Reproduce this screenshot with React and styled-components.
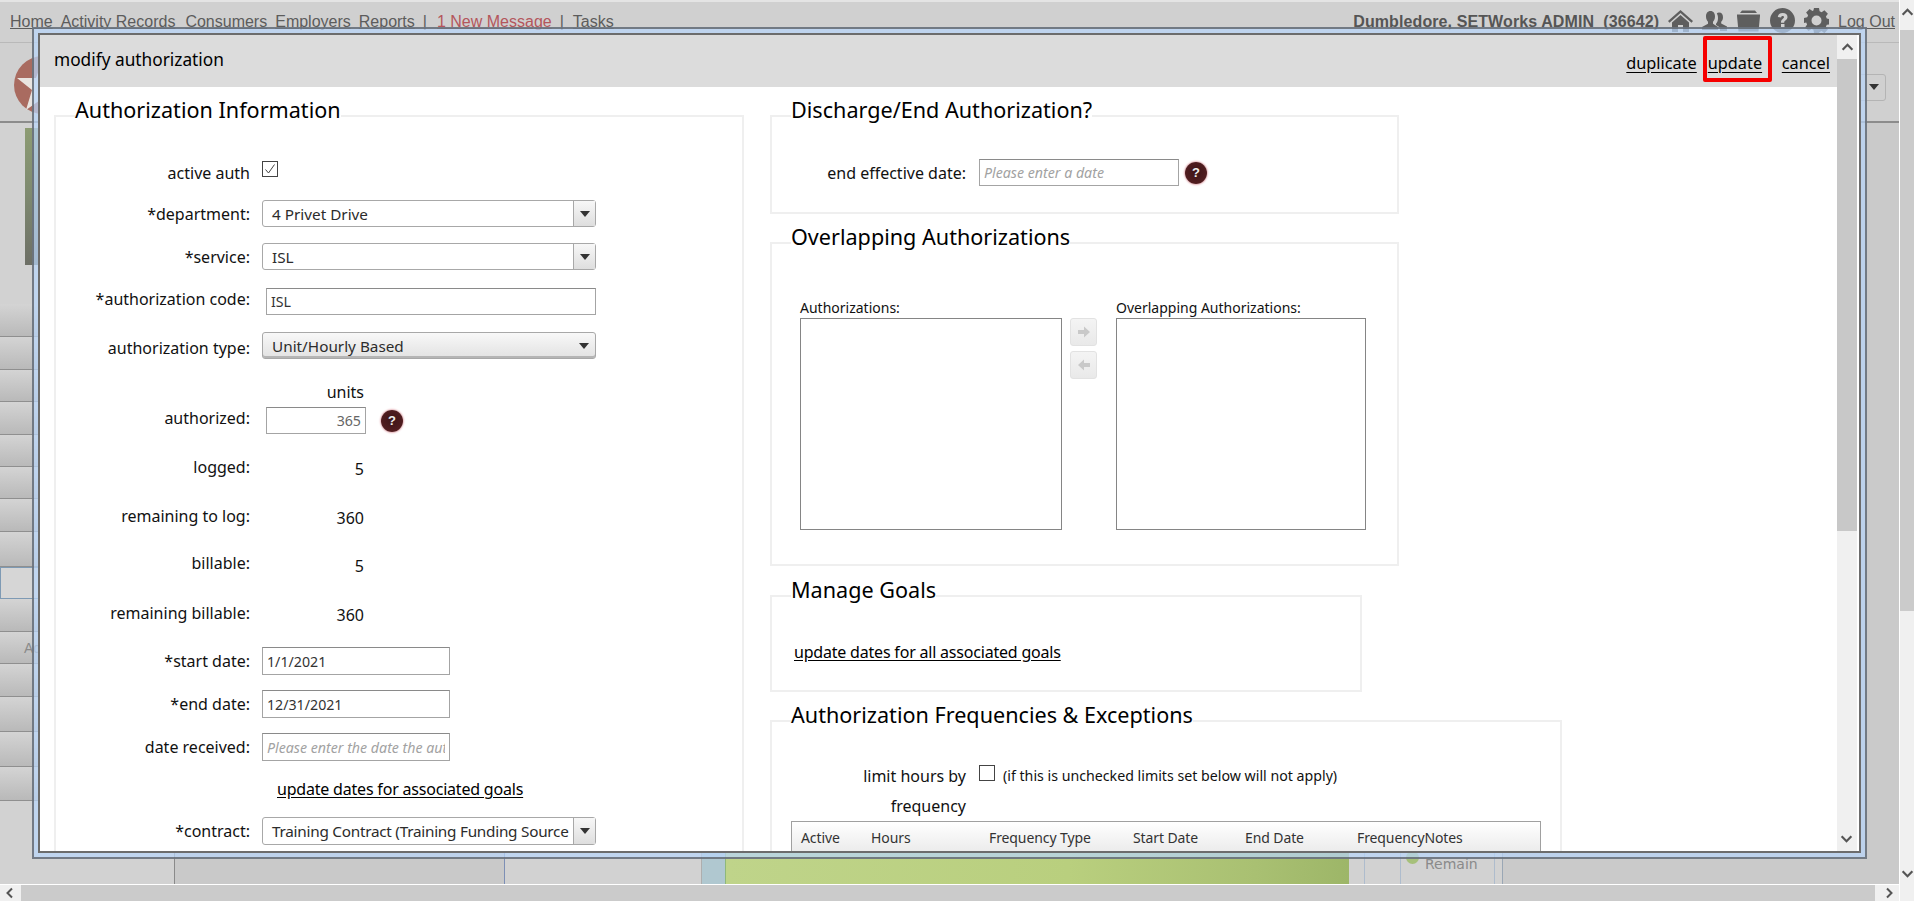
import React from 'react';
import styled, { createGlobalStyle } from 'styled-components';

const UI = `"Noto Sans", "Open Sans", sans-serif`;
const NAV = `"Liberation Sans", Arial, sans-serif`;

const Global = createGlobalStyle`
  html, body { margin: 0; padding: 0; overflow: hidden; background: #d0d0d0; }
  * { box-sizing: border-box; }
`;

const Shell = styled.div`
  position: relative; width: 1914px; height: 901px; overflow: hidden;
  display: grid; grid-template-columns: 1899px 15px; grid-template-rows: 884px 17px;
`;
const Page = styled.div`
  grid-column: 1; grid-row: 1; display: flex; flex-direction: column; overflow: hidden;
  background: #d0d0d0; border-top: 2px solid #e4e4e4;
`;
const Nav = styled.div`
  height: 41px; display: flex; align-items: flex-start; padding: 10px 4px 0 10px;
  border-bottom: 1px solid #b9b9b9; font: 16px/20px ${NAV}; color: #5c5c5c;
`;
const NavLink = styled.a`
  color: ${p => p.$alert ? '#b4565c' : '#5c5c5c'}; text-decoration: underline; margin-right: ${p => p.$mr ?? 8}px;
`;
const NavSep = styled.span`margin-right: ${p => p.$mr ?? 8}px;`;
const NavRight = styled.div`margin-left: auto; display: flex; align-items: flex-start;`;
const UserName = styled.b`font-weight: 700; color: #555; margin-right: 9px; white-space: pre; letter-spacing: 0.1px;`;
const NavIcon = styled.svg`
  width: 25px; height: 25px; margin: -4px ${p => p.$mr ?? 9}px 0 0; fill: #5e5e5e; filter: blur(0.4px); flex: none;
`;
const Brand = styled.div`
  height: 80px; display: flex; align-items: center; justify-content: space-between;
  border-bottom: 2px solid #8c8c8c; padding: 0 13px 0 14px;
`;
const Logo = styled.svg`width: 58px; height: 58px; margin-top: 6px;`;
const PageSelect = styled.div`
  width: 60px; height: 27px; margin-top: 10px; border: 1px solid #b4b4b4; border-radius: 3px;
  display: flex; align-items: center; justify-content: flex-end; padding-right: 6px;
`;
const Body = styled.div`flex: 1; display: flex; min-height: 0;`;
const Strip = styled.div`
  width: ${p => p.$w}px; flex: ${p => p.$w ? 'none' : 1}; background: ${p => p.$bg || '#d2d2d2'};
  border-right: ${p => p.$line ? `1px solid ${p.$line}` : 'none'};
`;
const SideCol = styled(Strip)`display: flex; flex-direction: column;`;
const Photo = styled.div`
  width: 120px; height: 137px; margin: 5px 0 39px 25px; flex: none;
  background: linear-gradient(180deg, #8d9c73 0%, #7f8b70 45%, #6d6f66 100%);
`;
const SideRow = styled.div`
  height: ${p => p.$h}px; flex: none; display: flex; align-items: center; padding-left: 24px;
  font: 14px ${NAV}; color: #8a8a8a;
  background: ${p => p.$on ? '#d6d6d6' : 'linear-gradient(180deg,#d4d4d4,#b9b9b9)'};
  border-bottom: 1px solid #8f8f8f;
  ${p => p.$on ? 'border: 1px solid #7e9ab4;' : ''}
`;
const LegendStrip = styled(Strip)`
  display: flex; flex-direction: column; justify-content: flex-end; padding: 0 0 12px 24px;
  font: 14px/16px "DejaVu Sans", sans-serif; color: #8a8a8a; position: relative;
`;
const GreenDot = styled.i`
  position: absolute; left: 5px; bottom: 20px; width: 13px; height: 13px; border-radius: 50%; background: #a6c07a;
`;

const VBar = styled.div`
  grid-column: 2; grid-row: 1 / 3; background: #f0f0f0; display: flex; flex-direction: column;
  align-items: center; padding-top: 6px; position: relative; border-left: 1px solid #fff;
`;
const VThumb = styled.div`width: 100%; height: 581px; margin-top: 11px; background: #cbcbcb; flex: none;`;
const HBar = styled.div`
  grid-column: 1; grid-row: 2; background: #f0f0f0; border-top: 1px solid #fff;
  display: flex; align-items: center;
`;
const HThumb = styled.div`flex: 1; height: 100%; background: #cbcbcb; margin: 0 24px 0 21px;`;
const Chevron = styled.svg`
  width: ${p => p.$s || 12}px; height: ${p => p.$s || 12}px; fill: none; stroke: #555; stroke-width: 2; flex: none;
`;
const EdgeArrow = styled.span`
  position: absolute; display: flex; ${p => p.$pos}
`;

const Modal = styled.div`
  position: absolute; left: 32px; top: 27px; width: 1835px; height: 832px; padding: 4px;
  background: rgba(185, 214, 250, 0.72); border: 2px solid rgba(85, 88, 92, 0.72);
`;
const Frame = styled.div`
  width: 100%; height: 100%; background: #fff; border: 2px solid #6c6c6c; display: flex; overflow: hidden;
`;
const Main = styled.div`flex: 1; min-width: 0; display: flex; flex-direction: column;`;
const Header = styled.div`
  height: 52px; flex: none; background: #dcdcdc; display: flex; align-items: center;
  padding: 0 7px 0 14px; font-family: ${UI}; color: #000;
`;
const Title = styled.div`font-size: 17.300px; margin-bottom: 4px; margin-right: auto;`;
const Action = styled.a`
  font-size: 16.300px; color: #000; text-decoration: underline; text-underline-offset: 3px;
  margin-top: 4px;
`;
const Highlight = styled.div`
  width: 69px; height: 46px; margin: 0 10px 4px 6px; padding: 4px 0 0 1px; border: 4px solid #f60000; border-radius: 2px;
  display: flex; align-items: center;
`;
const Scroller = styled.div`
  width: 20px; margin-right: 2px; flex: none; background: #f0f0f0; display: flex; flex-direction: column; align-items: center;
  padding-top: 6px; position: relative;
`;
const Thumb = styled.div`width: 100%; height: 472px; margin-top: 5px; background: #c8c8c8; flex: none;`;

const Columns = styled.div`
  flex: 1; min-height: 0; display: flex; gap: 26px; padding: 11px 0 0 14px; font-family: ${UI}; overflow: hidden;
  font-size: 16px; color: #111;
`;
const LeftCol = styled.div`width: 690px; flex: none;`;
const RightCol = styled.div`flex: 1; display: flex; flex-direction: column; gap: 12px; align-items: flex-start;`;
const Field = styled.fieldset`
  margin: 0 0 ${p => p.$mb || 0}px; padding: 0; border: 2px solid #efefef; min-width: 0; flex: none;
  width: ${p => p.$w}px; height: ${p => p.$h}px;
`;
const Legend = styled.legend`
  margin-left: 19px; padding: 0 0 12px; font-size: 21.600px; line-height: 24px; color: #000; height: 36px;
`;
const Row = styled.div`
  display: flex; align-items: center; height: ${p => p.$h || 27}px; margin-top: ${p => p.$mt ?? 0}px;
`;
const Label = styled.div`
  width: 194px; flex: none; text-align: right; margin-right: ${p => p.$mr ?? 12}px; white-space: nowrap;
  padding: ${p => p.$dy > 0 ? p.$dy * 2 : 0}px 0 ${p => p.$dy < 0 ? -p.$dy * 2 : 0}px;
`;
const Value = styled.div`
  width: 102px; text-align: right; padding: ${p => p.$dy > 0 ? p.$dy * 2 : 0}px 0 0; color: #111;
`;
const Box = styled.span`
  width: 16px; height: 16px; border: 1px solid #444; background: #fff; flex: none; display: flex;
  margin-bottom: ${p => p.$mb || 0}px;
`;
const Select = styled.div`
  width: 334px; height: ${p => p.$h || 27}px; border: 1px solid #a8a8a8; border-radius: 3px; display: flex; align-items: center;
  color: #2c2c2c; font-size: 15.300px; white-space: nowrap;
  background: ${p => p.$flat ? 'linear-gradient(180deg,#f8f8f8,#e2e2e2)' : '#fff'};
  ${p => p.$flat ? 'box-shadow: inset 0 -2px 0 #b5b5b5;' : ''}
`;
const SelectText = styled.span`flex: 1; padding-left: 9px; letter-spacing: ${p => p.$tight ? '-0.25px' : '0'};`;
const SelectBtn = styled.span`
  width: 22px; height: 100%; flex: none; display: flex; align-items: center; justify-content: center;
  ${p => p.$flat ? '' : 'border-left: 1px solid #a8a8a8; background: linear-gradient(180deg,#f7f7f7,#dedede);'}
`;
const Caret = styled.i`
  width: 0; height: 0; border-left: 5px solid transparent; border-right: 5px solid transparent; border-top: 6px solid #333;
`;
const Input = styled.input`
  width: ${p => p.$w}px; height: ${p => p.$h || 28}px; margin-left: ${p => p.$ml || 0}px; border: 1px solid #a4a4a4; border-top-color: #8a8a8a;
  padding: 0 4px; background: #fff; outline: none; flex: none;
  font-family: ${UI}; font-size: 14.200px; color: ${p => p.$right ? '#666' : '#333'};
  text-align: ${p => p.$right ? 'right' : 'left'};
  &::placeholder { color: #a2a2a2; font-style: italic; opacity: 1; }
`;
const Help = styled.span`
  width: 22px; height: 22px; margin-left: ${p => p.$ml || 6}px; border-radius: 50%; flex: none;
  background: radial-gradient(circle at 50% 45%, #3d1518 0%, #521d20 70%, #7c2e34 100%);
  box-shadow: 0 0 2px 0.5px #d98f98; color: #eee; font: 700 13px/22px ${NAV}; text-align: center;
`;
const TextLink = styled.a`
  color: #000; text-decoration: underline; text-underline-offset: 2px; margin-left: ${p => p.$ml || 0}px; letter-spacing: -0.2px;
`;
const Lists = styled.div`display: flex; align-items: flex-start; margin: 36px 0 0 28px;`;
const ListCol = styled.div`width: ${p => p.$w}px; flex: none; font-size: 14px; line-height: 21px;`;
const ListBox = styled.div`height: 212px; border: 1px solid #858585; background: #fff;`;
const Movers = styled.div`display: flex; flex-direction: column; gap: 5px; padding-top: 21px; margin: 0 19px 0 8px; width: 27px;`;
const MoveBtn = styled.span`
  height: 28px; border: 1px solid #e2e2e2; border-radius: 3px; background: linear-gradient(180deg,#f4f4f4,#e9e9e9);
  display: flex; align-items: center; justify-content: center;
`;
const LimitRow = styled.div`display: flex; align-items: flex-start; margin-top: 22px;`;
const LimitLabel = styled.div`width: 194px; text-align: right; line-height: 30px; flex: none;`;
const LimitCheck = styled.span`display: flex; margin: 4px 8px 0 13px; flex: none;`;
const Note = styled.span`font-size: 14.200px; line-height: 30px; color: #111;`;
const Table = styled.div`
  margin: 0 0 0 19px; width: 750px; height: 60px; border: 1px solid #a0a0a0;
  background: linear-gradient(180deg,#fff 0,#ebebeb 30px,#fff 30px); display: grid;
  grid-template-columns: 70px 118px 144px 112px 112px 1fr; padding: 6px 0 0 9px; font-size: 14px; letter-spacing: -0.1px; color: #333; align-content: start;
`;

const Chev = ({ d, s }) => (
  <Chevron $s={s} viewBox="0 0 12 12"><path d={d} /></Chevron>
);
const UP = 'M1.5 8 6 3.5 10.5 8';
const DOWN = 'M1.5 4 6 8.5 10.5 4';

const Check = () => (
  <svg width="14" height="14" viewBox="0 0 14 14" fill="none" stroke="#444" strokeWidth="1"><path d="M2.5 7.5 5.5 11 11.5 2.5" /></svg>
);
const ArrowIcon = styled.svg`
  width: 14px; height: 12px; fill: #c9c9c9; transform: ${p => p.$left ? 'scaleX(-1)' : 'none'};
`;
const Arrow = ({ left }) => (
  <ArrowIcon $left={left} viewBox="0 0 14 12"><path d="M1 4h6V0.5L13 6 7 11.5V8H1z" /></ArrowIcon>
);
const Drop = ({ text, flat, h, tight }) => (
  <Select $flat={flat} $h={h}>
    <SelectText $tight={tight}>{text}</SelectText>
    <SelectBtn $flat={flat}><Caret /></SelectBtn>
  </Select>
);

const sideHeights = [33, 33, 32, 33, 32, 32, 33, 35];
const sideHeights2 = [33, 32, 33, 35, 35, 34];

export default function App() {
  return (
    <>
      <Global />
      <Shell>
        <Page>
          <Nav>
            <NavLink>Home</NavLink><NavLink $mr={10}>Activity Records</NavLink><NavLink>Consumers</NavLink>
            <NavLink>Employers</NavLink><NavLink>Reports</NavLink><NavSep $mr={10}>|</NavSep>
            <NavLink $alert>1 New Message</NavLink><NavSep $mr={9}>|</NavSep><NavLink>Tasks</NavLink>
            <NavRight>
              <UserName>Dumbledore, SETWorks ADMIN  (36642)</UserName>
              <NavIcon viewBox="0 0 25 25"><path d="M12.5 2 0 13l1.5 1.7L12.5 5l11 9.7L25 13zM12.5 7 4 14.5V24h6v-7h5v7h6v-9.5z" /></NavIcon>
              <NavIcon viewBox="0 0 25 25"><path d="M8.5 3c3 0 4.5 2.400 4.500 5.500 0 2.300-.9 4.200-2 5.300v2l5 3.200v3H0v-3l6-3.200v-2c-1.100-1.100-2-3-2-5.300C4 5.400 5.500 3 8.500 3zM17 4.500c2.700 0 4 2 4 4.700 0 2-.8 3.700-1.800 4.600v1.700l5.800 3v4.500h-7v-3.500l-4-2.500v-1.200c1.200-1.300 2-3.300 2-5.600 0-2-.4-3.700-1.200-4.800.6-.6 1.300-.9 2.200-.9z" /></NavIcon>
              <NavIcon viewBox="0 0 25 25"><path d="M4 5 6 2.500h13L21 5zM1 6.500h23V8L22.500 23.500h-20L1 8z" /></NavIcon>
              <NavIcon viewBox="0 0 25 25"><path fillRule="evenodd" d="M12.500 0a12.500 12.500 0 1 0 0 25 12.500 12.500 0 0 0 0-25zM11 16v3.500h3.500V16zM12.700 5C9.800 5 8 6.500 7.800 9l3.300.4c.1-1 .6-1.500 1.500-1.500s1.400.5 1.400 1.200c0 .7-.4 1.100-1.300 1.800-1.400 1.100-1.800 1.900-1.700 3.800h3.200c0-1 .2-1.400 1.200-2.200 1.300-1 2.100-1.900 2.100-3.500C17.500 6.400 15.600 5 12.700 5z" /></NavIcon>
              <NavIcon $mr={9} viewBox="0 0 25 25"><path fillRule="evenodd" d="M10 0h5l.6 3.300 2 .9L20.400 2.300l3.500 3.500-2 2.800.9 2 3.200.6v5l-3.200.6-.9 2 2 2.800-3.500 3.500-2.800-2-2 .9L15 25h-5l-.6-3.200-2-.9-2.800 2-3.500-3.500 2-2.800-.9-2L0 14.900v-5l3.200-.6.9-2-2-2.800L5.600 1l2.800 2 1-.4zM12.500 7.500a5 5 0 1 0 0 10 5 5 0 0 0 0-10z" /></NavIcon>
              <NavLink $mr={0}>Log Out</NavLink>
            </NavRight>
          </Nav>
          <Brand>
            <Logo viewBox="0 0 58 58">
              <circle cx="29" cy="29" r="29" fill="#a96b60" />
              <path d="M29 3l7 19 19 0-15 12 6 20-17-12-17 12 6-20L3 22l19 0z" fill="#e9e4e0" />
            </Logo>
            <PageSelect><Caret /></PageSelect>
          </Brand>
          <Body>
            <SideCol $w={175} $line="#8a8a8a">
              <Photo />
              {sideHeights.map((h, i) => <SideRow key={i} $h={h} />)}
              <SideRow $h={32} $on />
              {sideHeights2.map((h, i) => <SideRow key={i} $h={h}>{i === 1 ? 'Add' : ''}</SideRow>)}
            </SideCol>
            <Strip $w={330} $bg="#c9c9c9" $line="#7d8fb5" />
            <Strip $w={197} $line="#aeaeae" />
            <Strip $w={24} $bg="#b0c8d0" $line="#8fb87a" />
            <Strip $w={623} $bg="linear-gradient(90deg,#bfd48a 0%,#b9cf7e 55%,#a9c072 85%,#9db668 100%)" />
            <Strip $w={16} $line="#aebccd" />
            <Strip $w={36} $line="#aebccd" />
            <LegendStrip $w={94} $line="#aebccd"><GreenDot />Remain</LegendStrip>
            <Strip $w={8} $line="#9aa7b5" />
            <Strip $bg="#cacaca" />
          </Body>
        </Page>

        <VBar>
          <Chev d={UP} s={13} />
          <VThumb />
          <EdgeArrow $pos="bottom: 21px; left: 1px;"><Chev d={DOWN} s={13} /></EdgeArrow>
        </VBar>
        <HBar>
          <EdgeArrow $pos="bottom: 2px; left: 4px;"><Chev d="M8 1.500 3.500 6 8 10.500" /></EdgeArrow>
          <HThumb />
          <EdgeArrow $pos="bottom: 2px; left: 1883px;"><Chev d="M4 1.500 8.500 6 4 10.500" /></EdgeArrow>
        </HBar>

        <Modal>
          <Frame>
            <Main>
              <Header>
                <Title>modify authorization</Title>
                <Action>duplicate</Action>
                <Highlight><Action>update</Action></Highlight>
                <Action>cancel</Action>
              </Header>
              <Columns>
                <LeftCol>
                  <Field $w={690} $h={900}>
                    <Legend>Authorization Information</Legend>
                    <Row $mt={26} $h={26}><Label>active auth</Label><Box $mb={8}><Check /></Box></Row>
                    <Row $mt={14}><Label>*department:</Label><Drop text="4 Privet Drive" /></Row>
                    <Row $mt={16}><Label>*service:</Label><Drop text="ISL" /></Row>
                    <Row $mt={18}><Label $dy={-3}>*authorization code:</Label><Input $w={330} $ml={4} $h={27} readOnly value="ISL" /></Row>
                    <Row $mt={17}><Label $dy={2}>authorization type:</Label><Drop flat text="Unit/Hourly Based" /></Row>
                    <Row $mt={23} $h={20}><Label /><Value>units</Value></Row>
                    <Row $mt={5}><Label $dy={-3}>authorized:</Label><Input $w={100} $ml={4} $h={27} $right readOnly value="365" /><Help $ml={15}>?</Help></Row>
                    <Row $mt={22} $h={24}><Label $dy={-1}>logged:</Label><Value $dy={1}>5</Value></Row>
                    <Row $mt={25} $h={24}><Label $dy={-1}>remaining to log:</Label><Value $dy={1}>360</Value></Row>
                    <Row $mt={24} $h={24}><Label $dy={-2}>billable:</Label><Value $dy={1}>5</Value></Row>
                    <Row $mt={25} $h={24}><Label $dy={-1}>remaining billable:</Label><Value $dy={1}>360</Value></Row>
                    <Row $mt={21} $h={28}><Label>*start date:</Label><Input $w={188} readOnly value="1/1/2021" /></Row>
                    <Row $mt={15} $h={28}><Label>*end date:</Label><Input $w={188} readOnly value="12/31/2021" /></Row>
                    <Row $mt={15} $h={28}><Label>date received:</Label><Input $w={188} readOnly placeholder="Please enter the date the authorization was received" /></Row>
                    <Row $mt={17} $h={22}><TextLink $ml={221}>update dates for associated goals</TextLink></Row>
                    <Row $mt={17} $h={28}><Label>*contract:</Label><Drop h={28} tight text="Training Contract (Training Funding Source" /></Row>
                  </Field>
                </LeftCol>
                <RightCol>
                  <Field $w={629} $h={116} $mb={-1}>
                    <Legend>Discharge/End Authorization?</Legend>
                    <Row $mt={25}>
                      <Label $mr={13}>end effective date:</Label>
                      <Input $w={200} $h={27} readOnly placeholder="Please enter a date" />
                      <Help>?</Help>
                    </Row>
                  </Field>
                  <Field $w={629} $h={341}>
                    <Legend>Overlapping Authorizations</Legend>
                    <Lists>
                      <ListCol $w={262}>Authorizations:<ListBox /></ListCol>
                      <Movers><MoveBtn><Arrow /></MoveBtn><MoveBtn><Arrow left /></MoveBtn></Movers>
                      <ListCol $w={250}>Overlapping Authorizations:<ListBox /></ListCol>
                    </Lists>
                  </Field>
                  <Field $w={592} $h={114} $mb={-1}>
                    <Legend>Manage Goals</Legend>
                    <Row $mt={28} $h={20}><TextLink $ml={22}>update dates for all associated goals</TextLink></Row>
                  </Field>
                  <Field $w={792} $h={400}>
                    <Legend>Authorization Frequencies &amp; Exceptions</Legend>
                    <LimitRow>
                      <LimitLabel>limit hours by<br />frequency</LimitLabel>
                      <LimitCheck><Box /></LimitCheck>
                      <Note>(if this is unchecked limits set below will not apply)</Note>
                    </LimitRow>
                    <Table>
                      <span>Active</span><span>Hours</span><span>Frequency Type</span><span>Start Date</span><span>End Date</span><span>FrequencyNotes</span>
                    </Table>
                  </Field>
                </RightCol>
              </Columns>
            </Main>
            <Scroller>
              <Chev d={UP} s={13} />
              <Thumb />
              <EdgeArrow $pos="bottom: 6px; left: 3px;"><Chev d={DOWN} s={13} /></EdgeArrow>
            </Scroller>
          </Frame>
        </Modal>
      </Shell>
    </>
  );
}
